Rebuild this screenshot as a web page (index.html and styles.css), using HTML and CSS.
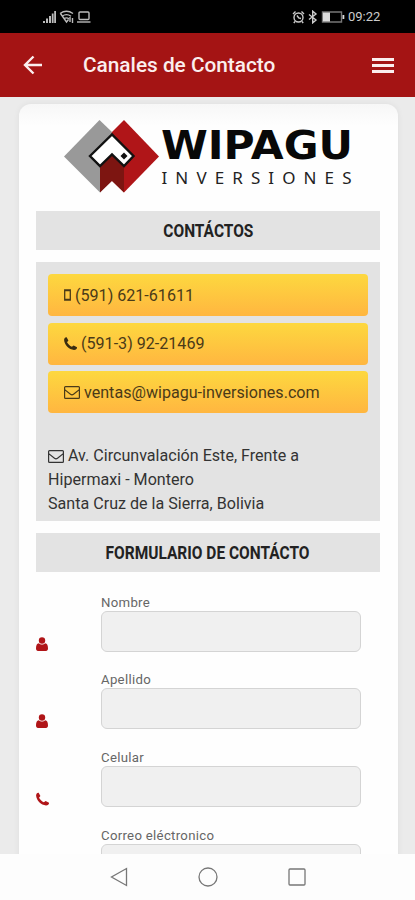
FILE: index.html
```html
<!DOCTYPE html>
<html lang="es">

<head>
    <meta charset="UTF-8">
    <title>Canales de Contacto</title>
    <link rel="stylesheet" href="styles.css">
</head>

<body>

    <!-- shared icons -->
    <svg class="defs" width="0" height="0">
        <symbol id="phone" viewBox="0.8 0.8 12.4 12.4">
            <path d="M3.3 1 5 4.200 3.700 5.800C4.600 7.500 6.300 9.200 8.300 10.200L10 8.900l3.200 1.700c.3 1.300-1.400 2.600-2.900 2.500C5.700 12.900 1.100 8.300.9 3.700.8 2.100 2 .7 3.300 1Z" />
        </symbol>
        <symbol id="user" viewBox="0 0 12 14">
            <circle cx="6" cy="3.500" r="3.200" />
            <path d="M2.800 6.200C4.500 8 7.500 8 9.200 6.200 11.200 6.400 12 8.500 12 11.500 12 13 11.200 14 10 14H2c-1.200 0-2-1-2-2.500C0 8.500.8 6.400 2.800 6.200Z" />
        </symbol>
        <symbol id="mail" viewBox="0 0 16 13">
            <path d="M1.500.7h13q.9 0 .9.900v9.800q0 .9-.9.900h-13q-.9 0-.9-.9V1.600q0-.9.900-.9ZM.7 3.600 6.500 8.300q1.500 1.100 3 0l5.800-4.700" fill="none" stroke="currentColor" stroke-width="1.200" />
        </symbol>
    </svg>

    <div class="status">
        <svg width="48" height="14" viewBox="0 0 48 14">
            <path d="M0 11h2v2H0zM3 8.500h2V13H3zM6 6h2v7H6zM8.800 3.500h1.800V13H8.800zM11.200 1H13v12h-1.800z" fill="#bbb" />
            <g fill="none" stroke="#bbb" stroke-width="1.400">
                <path d="M17 3.500q6.500-4.500 13 0M19 6.200q4.500-3.200 9 0M21 8.800q2.500-1.800 5 0M17.500 3.500l6 8.500 2-2.500" />
                <path d="M27 7v5M29.500 8v5" />
                <rect x="36" y="2" width="10" height="7.500" rx="1" />
                <path d="M34 12h13.500" />
            </g>
        </svg>
        <div class="status-right">
            <svg width="53" height="14" viewBox="0 0 53 14">
                <g fill="none" stroke="#ccc" stroke-width="1.400">
                    <circle cx="6.500" cy="7.500" r="4.500" />
                    <path d="M1 4 3.500 1.500M9.500 1.500 12 4M5 5.500l1.700 2.500 2.300.5M3 11.500 1.800 13M10 11.500l1.200 1.500" />
                    <path d="M17 4.500l7 5.500-3.300 2.800V1.200L24 4l-7 5.500" />
                    <path d="M30.500 2h19v10h-19z" stroke="#777" />
                </g>
                <path d="M31 2.500h7v9h-7zM50.500 5h1.800v4h-1.800z" fill="#ddd" />
            </svg>
            <span class="time">09:22</span>
        </div>
    </div>

    <div class="header">
        <svg class="back" width="20" height="20" viewBox="0 0 20 20">
            <path d="M19 10H2M10.500 1.500 2 10l8.500 8.500" />
        </svg>
        <h1>Canales de Contacto</h1>
        <div class="menu"><span></span><span></span><span></span></div>
    </div>

    <div class="content">
        <div class="card">
            <svg class="logo" width="344" height="107" viewBox="36 104 344 107">
                <path d="M99.500 120 64 156.500 100 192.500 112 180V132Z" fill="#999" />
                <path d="M124 120 159 156.500 124 192.500 100 169 112 132Z" fill="#b01518" />
                <path d="M100 166 112 155 124 166V192.500L112 181 100 192.500Z" fill="#7d1511" />
                <path d="M90 156 112 134.500 133.500 156 124 166 112 154.500 100 166Z" fill="#fff" stroke="#111" stroke-width="2.400" />
                <path d="M124 152.500l3.500 3.500-3.500 3.500-3.500-3.500Z" fill="#111" />
                <text class="logo-name" x="161" y="159" textLength="192" lengthAdjust="spacingAndGlyphs">WIPAGU</text>
                <text class="logo-sub" x="161.500" y="184" textLength="190">INVERSIONES</text>
            </svg>

            <h2><span>CONTÁCTOS</span></h2>

            <div class="panel">
                <a class="btn">
                    <svg width="7" height="12" viewBox="0 0 7 12">
                        <path d="M.7 1h5.600v10H.7zM.7 1.500h5.600M.7 10.300h5.600" fill="none" stroke="currentColor" stroke-width="1.300" />
                    </svg>
                    <span>(591) 621-61611</span>
                </a>
                <a class="btn">
                    <svg width="13" height="13"><use href="#phone" /></svg>
                    <span>(591-3) 92-21469</span>
                </a>
                <a class="btn">
                    <svg width="16" height="13"><use href="#mail" /></svg>
                    <span>ventas@wipagu-inversiones.com</span>
                </a>
                <p class="address">
                    <svg width="16" height="13"><use href="#mail" /></svg> Av. Circunvalación Este, Frente a<br>
                    Hipermaxi - Montero<br>
                    Santa Cruz de la Sierra, Bolivia
                </p>
            </div>

            <h2><span>FORMULARIO DE CONTÁCTO</span></h2>

            <form>
                <div class="row">
                    <svg width="12" height="14"><use href="#user" /></svg>
                    <label>Nombre<input type="text"></label>
                </div>
                <div class="row">
                    <svg width="12" height="14"><use href="#user" /></svg>
                    <label>Apellido<input type="text"></label>
                </div>
                <div class="row">
                    <svg width="13" height="14"><use href="#phone" /></svg>
                    <label>Celular<input type="text"></label>
                </div>
                <div class="row">
                    <svg width="16" height="13"><use href="#mail" /></svg>
                    <label>Correo eléctronico<input type="text"></label>
                </div>
            </form>
        </div>
    </div>

    <div class="navbar">
        <svg width="18" height="20" viewBox="0 0 18 20"><path d="M16.500 1.500v17L1.500 10Z" /></svg>
        <svg width="20" height="20" viewBox="0 0 20 20"><circle cx="10" cy="10" r="9" /></svg>
        <svg width="18" height="18" viewBox="0 0 18 18"><rect x="1" y="1" width="16" height="16" rx="1" /></svg>
    </div>

</body>

</html>
```

FILE: styles.css
```css
* {
    box-sizing: border-box;
}

body {
    margin: 0;
    height: 900px;
    display: flex;
    flex-direction: column;
    overflow: hidden;
    font-family: Roboto, sans-serif;
    color: #333;
    background: #fdfdfd;
}

.defs {
    display: none;
}

.status {
    height: 33px;
    flex: none;
    display: flex;
    justify-content: space-between;
    align-items: center;
    padding: 0 34px 0 43px;
    background: #000;
}

.status-right {
    display: flex;
    align-items: center;
    gap: 3px;
}

.time {
    width: 33px;
    font-size: 13px;
    color: #ccc;
}

.header {
    height: 64px;
    flex: none;
    display: flex;
    align-items: center;
    padding: 0 21px 0 23px;
    background: #a41414;
    color: #fff;
}

.back {
    fill: none;
    stroke: #fbeeee;
    stroke-width: 2.4;
}

h1 {
    flex: 1;
    margin: 0 0 0 40px;
    font-size: 20.8px;
    font-weight: 500;
    color: #fbeeee;
}

.menu {
    width: 22px;
    margin-top: 1px;
    display: flex;
    flex-direction: column;
    gap: 3px;
}

.menu span {
    height: 3px;
    background: #fbeeee;
}

.content {
    height: 757px;
    flex: none;
    overflow: hidden;
    padding: 7px 17px 0 19px;
    background: #ebebeb;
}

.card {
    height: 800px;
    padding: 0 18px 0 17px;
    border-radius: 12px 12px 0 0;
    background: linear-gradient(#f7f7f7, #fefefe 22px);
    box-shadow: 0 0 6px rgba(0, 0, 0, 0.06);
}

.logo {
    display: block;
}

.logo-name {
    font: bold 39px "DejaVu Sans", sans-serif;
    fill: #080808;
}

.logo-sub {
    font: 17px "Noto Sans", sans-serif;
    fill: #222;
}

h2 {
    height: 39px;
    margin: 0 0 12px;
    display: flex;
    justify-content: center;
    align-items: center;
    font-size: 18px;
    font-weight: 700;
    color: #222;
    background: #e3e3e3;
}

/* condensed look */
h2 span {
    transform: scaleX(0.86);
    white-space: nowrap;
}

.panel {
    height: 259px;
    margin-bottom: 12px;
    padding: 12px;
    background: #e3e3e3;
}

.btn {
    height: 42px;
    margin-bottom: 6.5px;
    padding: 0 16px;
    display: flex;
    align-items: center;
    gap: 4px;
    border-radius: 4px;
    font-size: 16.1px;
    color: #4a3a18;
    fill: #3a2c10;
    background: linear-gradient(#fdd83f, #ffb640);
}

.address {
    margin: 31px 0 0;
    font-size: 16.1px;
    line-height: 24px;
    white-space: nowrap;
}

.address svg {
    vertical-align: -2px;
}

form {
    padding-top: 9.5px;
}

.row {
    height: 77.75px;
    display: flex;
}

.row svg {
    flex: none;
    margin-top: 43px;
    color: #b01518;
    fill: #b01518;
}

label {
    width: 260px;
    margin-left: auto;
    margin-right: 19px;
    font-size: 13.2px;
    letter-spacing: 0.3px;
    line-height: 17px;
    color: #666;
}

input {
    display: block;
    width: 100%;
    height: 41px;
    border: 1px solid #d4d4d4;
    border-radius: 6px;
    background: #f0f0f0;
}

.navbar {
    height: 46px;
    display: flex;
    justify-content: center;
    align-items: center;
    gap: 70px;
    fill: none;
    stroke: #777;
    stroke-width: 1.3;
}
```
